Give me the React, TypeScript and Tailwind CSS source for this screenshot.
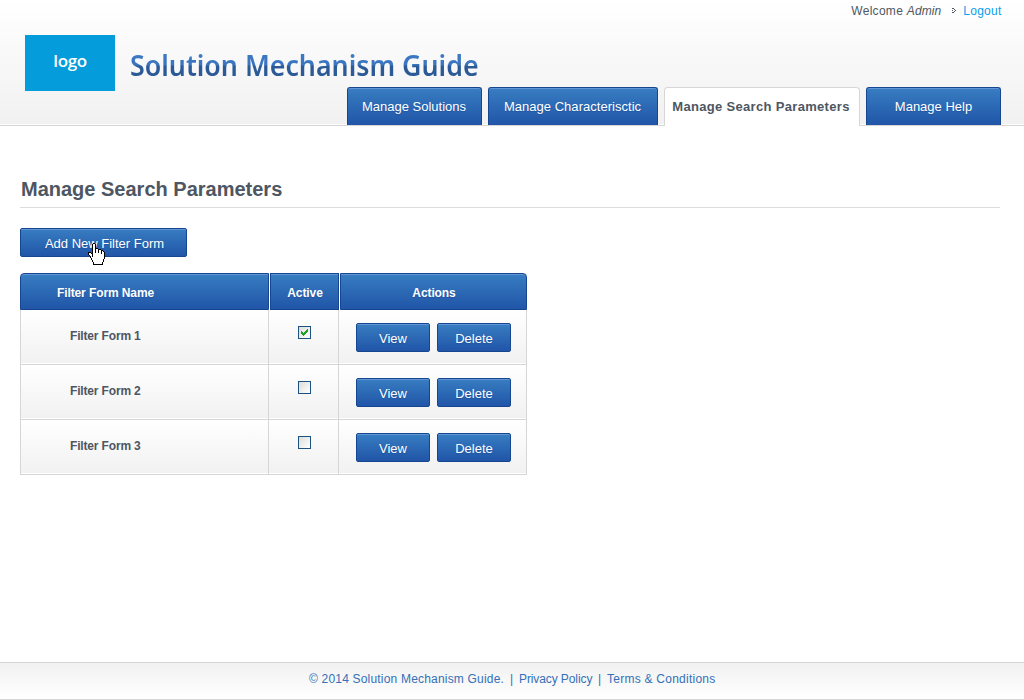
import React from "react";

const blue = "border border-[#15468f] bg-linear-to-b from-[#387dc1] to-[#2155a8] text-white [text-shadow:0_1px_1px_#15468f80]";

const HAND = [
  ".....XX..........",
  "....XooX.........",
  "....XooX.........",
  "....XooX.........",
  "....XooX.........",
  "....XooXXX.......",
  "....XooXooXXX....",
  "....XooXooXooXX..",
  "....XooXooXooXoX.",
  "XXX.XooXooXooXooX",
  "XooXXooooooooXooX",
  "XoooXoooooooooooX",
  ".XooXoooooooooooX",
  "..XoXoooooooooooX",
  "..XoooooooooooooX",
  "...XooooooooooooX",
  "...XoooooooooooX.",
  "....XooooooooooX.",
  "....XooooooooooX.",
  ".....XooooooooX..",
  ".....XooooooooX..",
  ".....XXXXXXXXXX..",
];

function HandCursor() {
  return (
    <svg className="pointer-events-none absolute top-[15px] left-[68px]" width="17" height="22" shapeRendering="crispEdges">
      {HAND.flatMap((row, y) =>
        row.split("").map((c, x) =>
          c === "." ? null : <rect key={`${x}-${y}`} x={x} y={y} width="1" height="1" fill={c === "X" ? "#000" : "#fff"} />
        )
      )}
    </svg>
  );
}

function Tab({ label, className }: { label: string; className: string }) {
  return (
    <a className={`flex h-[38px] items-center justify-center rounded-t-[3px] border-b-0 text-[13px] shadow-[inset_0_1px_0_#6295d5] ${blue} ${className}`}>
      {label}
    </a>
  );
}

function Button({ label, className }: { label: string; className: string }) {
  return (
    <button className={`flex h-[29px] items-center justify-center rounded-[2px] pt-[3px] text-[13px] shadow-[inset_0_1px_0_#6295d5] ${blue} ${className}`}>
      {label}
    </button>
  );
}

function Checkbox({ checked }: { checked: boolean }) {
  return (
    <span className="block size-[13px] border border-[#1c5180] bg-linear-to-br from-[#dcdcd7] to-white">
      {checked && (
        <svg width="11" height="11" shapeRendering="crispEdges" className="block">
          <path d="M8 2h1v3h-1v1h-1v1h-1v1h-1v1h-1v-1h-1v-1h-1v-3h1v1h1v1h1v-1h1v-1h1v-1h1z" fill="#21a121" />
        </svg>
      )}
    </span>
  );
}

const rows = [
  { name: "Filter Form 1", active: true },
  { name: "Filter Form 2", active: false },
  { name: "Filter Form 3", active: false },
];

const cell = "bg-linear-to-b from-white to-[#f1f1f1] border-b border-r border-[#d6d6d6] shadow-[inset_0_-1px_0_#fff]";
const head = "flex items-center justify-center pt-0.5 text-[12px] font-bold shadow-[inset_0_1px_0_#6295d5]";

export default function App() {
  return (
    <div className="flex h-[700px] w-[1024px] flex-col overflow-hidden bg-white font-['Liberation_Sans',Arial,sans-serif] text-[#4d5661]">
      <header className="flex h-[126px] shrink-0 flex-col border-b border-[#d6d6d6] bg-linear-to-b from-white to-[#f1f1f1] shadow-[inset_0_-1px_0_#fff]">
        <div className="flex h-[35px] shrink-0 justify-end pt-[3px] pr-[22.5px] text-[12px] leading-4">
          <span className="tracking-[0.3px]">Welcome <em className="tracking-[0.1px]">Admin</em></span>
          <svg width="4" height="5" className="mt-[5px] mr-[7px] ml-[11px]" shapeRendering="crispEdges">
            <path d="M0 0h1v1h-1zM2 0h-1v1h1v1h1v1h-1v1h-1v1h1v-1h1v-1h1v-1h-1v-1h-1zM0 2h1v1h-1zM0 4h1v1h-1z" fill="#4d5661" />
          </svg>
          <a className="tracking-[0.25px] text-[#08a0f0]">Logout</a>
        </div>
        <div className="flex h-[52px] shrink-0">
          <div className="ml-[25px] flex h-[56px] w-[90px] shrink-0 justify-center bg-[#049cdb] pt-[13px] font-['Open_Sans','Noto_Sans',sans-serif] text-[17px] leading-[26px] font-semibold tracking-[-0.4px] text-white">
            logo
          </div>
          <h1 className="ml-[15px] h-[52px] origin-left scale-x-[0.956] bg-[linear-gradient(#3f7dca_0px,#3b75bf_30px,#2c5a96_31px,#2c5a96_52px)] bg-clip-text pt-[8px] font-['Noto_Sans','Open_Sans',sans-serif] text-[28px] leading-[44px] font-semibold whitespace-nowrap text-transparent">
            Solution Mechanism Guide
          </h1>
        </div>
        <nav className="flex h-[38px] shrink-0 items-start gap-[6px] pl-[347px]">
          <Tab label="Manage Solutions" className="w-[135px] pr-px" />
          <Tab label="Manage Characterisctic" className="w-[170px] pr-px tracking-[0.03px]" />
          <a className="flex h-[39px] w-[196px] items-center justify-center rounded-t-[4px] border border-b-0 border-[#d6d6d6] bg-white pr-0.5 pb-px text-[13px] font-bold tracking-[0.32px] whitespace-nowrap">
            Manage Search Parameters
          </a>
          <Tab label="Manage Help" className="w-[135px]" />
        </nav>
      </header>

      <main className="grow pr-6 pl-5">
        <h2 className="mt-[49px] h-[33px] border-b border-[#dcdcdc] pl-px text-[20px] leading-[28px] font-bold">Manage Search Parameters</h2>
        <div className="relative mt-5">
          <Button label="Add New Filter Form" className="w-[167px] pl-[2px]" />
          <HandCursor />
        </div>
        <div className="mt-4 w-[507px]">
          <div className="grid h-[37px] grid-cols-[249px_69px_187px] gap-px">
            <div className={`rounded-tl-[4px] pr-[78px] tracking-[-0.1px] ${head} ${blue}`}>Filter Form Name</div>
            <div className={`pl-px tracking-[-0.1px] ${head} ${blue}`}>Active</div>
            <div className={`rounded-tr-[4px] pl-px tracking-[-0.1px] ${head} ${blue}`}>Actions</div>
          </div>
          {rows.map((r) => (
            <div key={r.name} className="grid h-[55px] grid-cols-[249px_70px_188px]">
              <div className={`border-l pt-[18px] pl-[49px] text-[12px] leading-4 font-bold tracking-[-0.16px] ${cell}`}>{r.name}</div>
              <div className={`flex pt-4 pl-[29px] ${cell}`}><Checkbox checked={r.active} /></div>
              <div className={`flex gap-[7px] pt-[13px] pl-[17px] ${cell}`}>
                <Button label="View" className="w-[74px]" />
                <Button label="Delete" className="w-[74px]" />
              </div>
            </div>
          ))}
        </div>
      </main>

      <footer className="flex h-[38px] shrink-0 border-y border-[#d6d6d6] bg-linear-to-b from-[#f1f1f1] to-white pt-2 pl-[309px] text-[12px] leading-4 whitespace-pre text-[#3470b8]">
        <span className="w-[194px] tracking-[0.19px]">© 2014 Solution Mechanism Guide.</span>
        <span className="w-[16px] pl-px text-center">|</span>
        <a className="w-[73px] tracking-[-0.1px]">Privacy Policy</a>
        <span className="w-[15px] text-center">|</span>
        <a className="tracking-[0.25px]">Terms &amp; Conditions</a>
      </footer>
    </div>
  );
}
